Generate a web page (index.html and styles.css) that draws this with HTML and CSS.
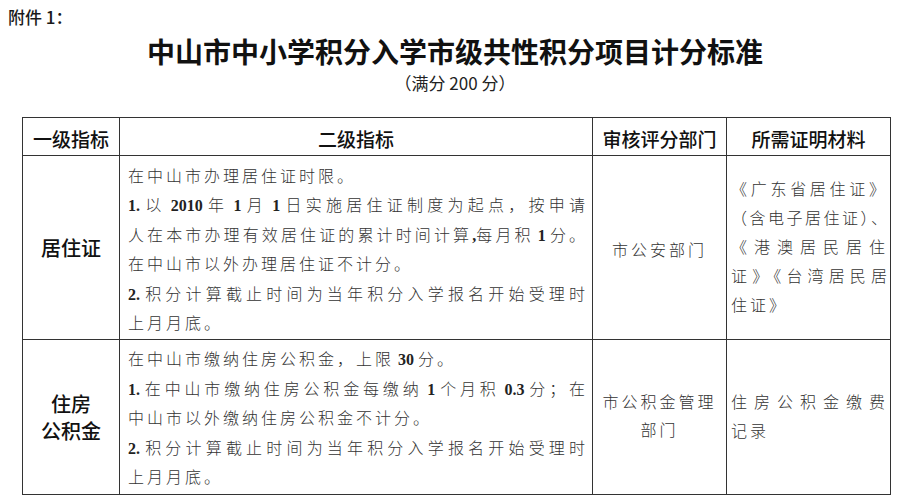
FILE: index.html
```html
<!DOCTYPE html>
<html lang="zh-CN">
<head>
<meta charset="utf-8">
<title>中山市中小学积分入学市级共性积分项目计分标准</title>
<link rel="stylesheet" href="styles.css">
</head>
<body>
<div class="page">
  <div class="attach">附件 1：</div>
  <h1 class="title">中山市中小学积分入学市级共性积分项目计分标准</h1>
  <div class="subtitle">（满分 200 分）</div>
  <table class="std">
    <colgroup><col class="c1"><col class="c2"><col class="c3"><col class="c4"></colgroup>
    <thead>
      <tr class="hd"><th>一级指标</th><th>二级指标</th><th>审核评分部门</th><th>所需证明材料</th></tr>
    </thead>
    <tbody>
      <tr class="r1">
        <td class="lvl1">居住证</td>
        <td class="desc">
          <span class="ln">在中山市办理居住证时限。</span>
          <span class="ln j"><span class="n">1. </span>以<span class="n"> 2010 </span>年<span class="n"> 1 </span>月<span class="n"> 1 </span>日实施居住证制度为起点，按申请</span>
          <span class="ln j">人在本市办理有效居住证的累计时间计算<span class="n">,</span>每月积<span class="n"> 1 </span>分。</span>
          <span class="ln">在中山市以外办理居住证不计分。</span>
          <span class="ln j"><span class="n">2. </span>积分计算截止时间为当年积分入学报名开始受理时</span>
          <span class="ln">上月月底。</span>
        </td>
        <td class="dept d1">市公安部门</td>
        <td class="mat">
          <span class="ln j">《广东省居住证》</span>
          <span class="ln j t1">（含电子居住证）、</span>
          <span class="ln j">《港澳居民居住</span>
          <span class="ln j t1">证》《台湾居民居</span>
          <span class="ln">住证》</span>
        </td>
      </tr>
      <tr class="r2">
        <td class="lvl1">住房<br>公积金</td>
        <td class="desc">
          <span class="ln">在中山市缴纳住房公积金，上限<span class="n"> 30 </span>分。</span>
          <span class="ln j"><span class="n">1. </span>在中山市缴纳住房公积金每缴纳<span class="n"> 1 </span>个月积<span class="n"> 0.3 </span>分；在</span>
          <span class="ln">中山市以外缴纳住房公积金不计分。</span>
          <span class="ln j"><span class="n">2. </span>积分计算截止时间为当年积分入学报名开始受理时</span>
          <span class="ln">上月月底。</span>
        </td>
        <td class="dept">市公积金管理<br>部门</td>
        <td class="mat">
          <span class="ln j">住房公积金缴费</span>
          <span class="ln">记录</span>
        </td>
      </tr>
    </tbody>
  </table>
</div>
</body>
</html>
```
FILE: styles.css
```css
* { box-sizing: border-box; }
html, body { margin: 0; padding: 0; background: #fff; }
body { font-family: "Noto Sans CJK SC", sans-serif; color: #111; }
.page { width: 902px; }

.attach { padding: 6px 0 0 8px; font-size: 17px; line-height: 22px; font-weight: 500; color: #1a1a1a; }
.title { margin: 6px 0 0; padding-left: 8px; text-align: center; font-size: 28px; line-height: 34px; font-weight: 700; color: #111; }
.subtitle { margin-top: 3px; padding-left: 8px; text-align: center; font-size: 17px; line-height: 23px; color: #222; }

.std { margin: 23px 0 0 22px; border-collapse: collapse; table-layout: fixed; width: 868px; }
.c1 { width: 97px; }
.c2 { width: 473px; }
.c3 { width: 134px; }
.c4 { width: 164px; }
.std th, .std td { border: 1px solid #333; padding: 0; }

.hd { height: 38px; }
.std .hd th { font-size: 19px; font-weight: 500; line-height: 24px; padding-top: 4px; vertical-align: middle; text-align: center; color: #111; }
.r1 { height: 182px; }
.r2 { height: 155px; }

.std td.lvl1 { text-align: center; font-size: 20px; font-weight: 500; line-height: 27px; vertical-align: middle; color: #111; }

.std td.desc, .std td.dept, .std td.mat { font-family: "Liberation Serif", "Noto Sans CJK SC", serif; font-size: 16px; font-weight: 300; letter-spacing: 3px; color: #333; line-height: 29.5px; }
.std td.desc { vertical-align: top; padding: 5.5px 4px 0 8px; }
.std td.dept { text-align: center; vertical-align: middle; padding: 0 3px; line-height: 28px; }
.std td.d1 { padding-top: 7px; }
.std td.mat { vertical-align: middle; padding: 0 2px 0 4px; line-height: 29px; }

.ln { display: block; }
.j { text-align: justify; text-align-last: justify; }
.n { letter-spacing: 0; font-weight: 700; color: #222; }
.t1 { letter-spacing: 1px; }
```
